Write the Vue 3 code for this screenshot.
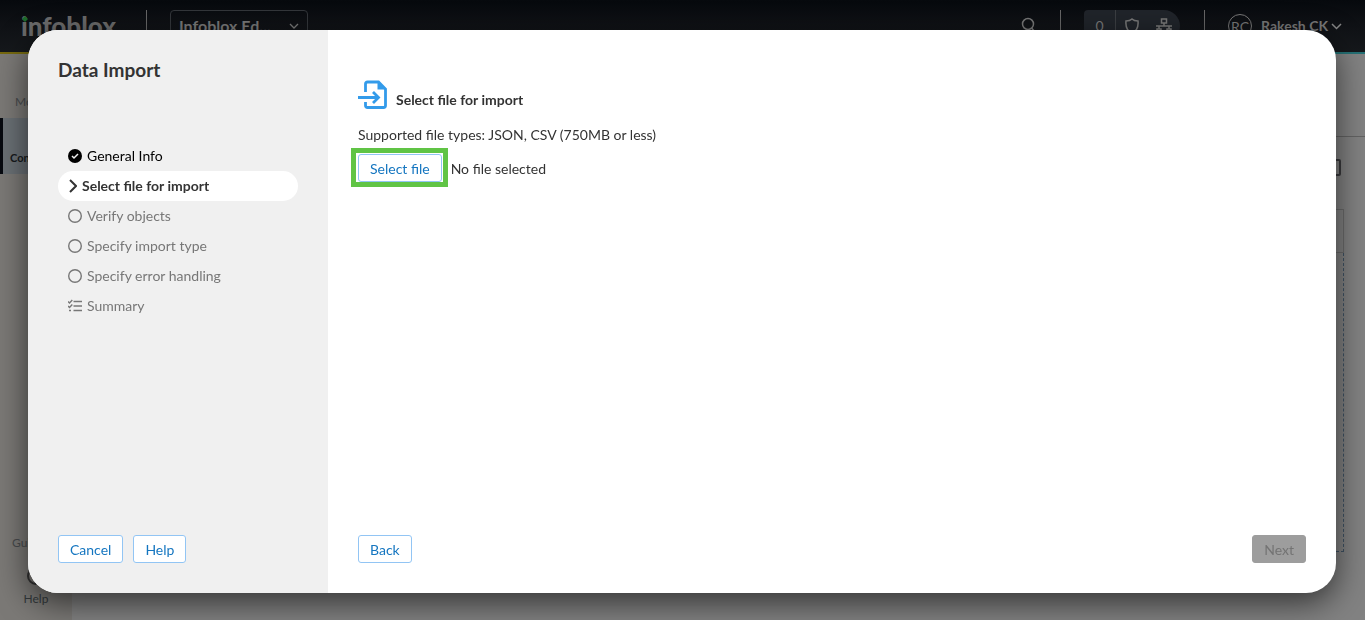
<script setup>
import { ref } from 'vue'

const steps = [
  { label: 'General Info', state: 'done' },
  { label: 'Select file for import', state: 'active' },
  { label: 'Verify objects', state: 'todo' },
  { label: 'Specify import type', state: 'todo' },
  { label: 'Specify error handling', state: 'todo' },
  { label: 'Summary', state: 'summary' },
]

const fileInput = ref(null)
const fileName = ref('')

function onPick(event) {
  const file = event.target.files[0]
  fileName.value = file ? file.name : ''
}
</script>

<template>
  <div class="page">
    <header class="topbar">
      <a class="logo" href="#">infoblox
        <svg class="logo-dot" width="6" height="6" viewBox="0 0 6 6" aria-hidden="true">
          <path d="M3 0L6 3L3 6L0 3Z" fill="#1c6a2b" />
        </svg>
      </a>
      <span class="rule logo-rule"></span>
      <button class="account" type="button">
        <span>Infoblox Ed...</span>
        <svg width="10" height="6" viewBox="0 0 10 6" fill="none" stroke="#777" stroke-width="1.300"><path d="M1 1L5 5L9 1" /></svg>
      </button>
      <button class="icon-button search" type="button" aria-label="Search">
        <svg width="16" height="18" viewBox="0 0 16 18" fill="none" stroke="#777" stroke-width="1.500">
          <circle cx="7" cy="7" r="5.500" /><path d="M10.500 11L15 16" />
        </svg>
      </button>
      <span class="rule"></span>
      <div class="status">
        <button class="count" type="button">0</button>
        <button class="icon-button" type="button" aria-label="Security">
          <svg width="14" height="16" viewBox="0 0 14 16" fill="none" stroke="#777" stroke-width="1.500">
            <path d="M7 1C5.500 2.500 3.500 3 1 3C.5 8 2 13 7 15C12 13 13.500 8 13 3C10.500 3 8.500 2.500 7 1Z" />
          </svg>
        </button>
        <button class="icon-button" type="button" aria-label="Network">
          <svg width="18" height="16" viewBox="0 0 18 16" fill="none" stroke="#777" stroke-width="1.500">
            <path d="M6.500 1H11.500V5H6.500ZM9 5V8M1 8H17M4 8V11M14 8V11M2 11H6V15H2ZM12 11H16V15H12Z" />
          </svg>
        </button>
      </div>
      <span class="rule user-rule"></span>
      <button class="user" type="button">
        <span class="avatar">RC</span>
        <span>Rakesh CK</span>
        <svg width="11" height="7" viewBox="0 0 11 7" fill="none" stroke="#858585" stroke-width="1.500"><path d="M1 1L5.500 5.500L10 1" /></svg>
      </button>
    </header>

    <div class="body">
      <nav class="rail">
        <a class="rail-link" href="#">Monitor</a>
        <a class="rail-link current" href="#">Configure</a>
        <span class="rail-space"></span>
        <a class="rail-link guide" href="#">Guides</a>
        <a class="rail-link help" href="#">
          <svg width="18" height="18" viewBox="0 0 18 18" fill="none" stroke="#333" stroke-width="2"><circle cx="9" cy="9" r="8" /></svg>
          Help
        </a>
      </nav>
      <main class="workspace">
        <div class="heading"></div>
        <div class="tools"><button class="square" type="button" aria-label="Options"></button></div>
        <div class="grid-head"></div>
        <div class="grid-body"></div>
      </main>
    </div>

    <section class="dialog" role="dialog" aria-labelledby="dialog-title">
      <aside class="wizard">
        <h1 id="dialog-title">Data Import</h1>
        <ol class="steps">
          <li v-for="step in steps" :key="step.label" :class="['step', step.state]">
            <svg v-if="step.state === 'done'" width="14" height="14" viewBox="0 0 14 14">
              <circle cx="7" cy="7" r="7" fill="#000" /><path d="M4 7L6 9L10 5" fill="none" stroke="#f0f0f0" stroke-width="1.500" />
            </svg>
            <svg v-else-if="step.state === 'active'" width="9" height="14" viewBox="0 0 9 14">
              <path d="M2 1L8 7L2 13" fill="none" stroke="#333" stroke-width="2" />
            </svg>
            <svg v-else-if="step.state === 'todo'" width="14" height="14" viewBox="0 0 14 14">
              <circle cx="7" cy="7" r="6.300" fill="none" stroke="#777" stroke-width="1.400" />
            </svg>
            <svg v-else width="14" height="14" viewBox="0 0 14 14" fill="none" stroke="#777" stroke-width="1.400">
              <path d="M5.500 2.500H14M5.500 7H14M5.500 11.500H14M0 2.500L1.500 4L4.300 1M0 7L1.500 8.500L4.300 5.500M1 11.500H3" />
            </svg>
            <span>{{ step.label }}</span>
          </li>
        </ol>
        <footer class="actions">
          <button class="btn" type="button">Cancel</button>
          <button class="btn" type="button">Help</button>
        </footer>
      </aside>

      <div class="content">
        <h2>
          <svg width="30" height="30" viewBox="0 0 30 30" fill="none" stroke="#339bea" stroke-width="2.800">
            <path d="M7.500 12V4Q7.500 2 9.500 2H20.500L27.500 9V25.500Q27.500 27.500 25.500 27.500H9.500Q7.500 27.500 7.500 25.500V22" />
            <path d="M19.500 1.500V9.500H28Z" fill="#339bea" stroke="none" />
            <path d="M0 17.500H20M15 12L20.500 17.500L15 23" />
          </svg>
          <span>Select file for import</span>
        </h2>
        <p class="types">Supported file types: JSON, CSV (750MB or less)</p>
        <div class="picker">
          <button class="btn marked" type="button" @click="fileInput.click()">Select file</button>
          <input ref="fileInput" type="file" accept=".json,.csv" aria-label="File for import" hidden @change="onPick">
          <span class="file-name">{{ fileName || 'No file selected' }}</span>
        </div>
        <footer class="actions spread">
          <button class="btn" type="button">Back</button>
          <button class="btn" type="button" disabled>Next</button>
        </footer>
      </div>
    </section>
  </div>
</template>

<style>
body {
  margin: 0;
  background: #828282;
}
</style>

<style scoped>
* {
  box-sizing: border-box;
}
.page {
  display: flex;
  flex-direction: column;
  height: 100vh;
  overflow: hidden;
  font: 14px/20px Lato, "Liberation Sans", sans-serif;
  color: #333;
}
button {
  font: inherit;
  color: inherit;
  background: none;
  border: 0;
  padding: 0;
  margin: 0;
}
a {
  color: inherit;
  text-decoration: none;
}
svg {
  flex: none;
  display: block;
}
.topbar {
  display: flex;
  align-items: center;
  height: 54px;
  flex: none;
  padding: 0 23px 2px 21px;
  color: #777;
  background: linear-gradient(90deg, #77690f, #2b6b45 50%, #257075) bottom / 100% 2px no-repeat,
    linear-gradient(#06090d, #101216 50%, #16191c);
}
.logo {
  position: relative;
  width: 96px;
  font-size: 26px;
  line-height: 32px;
  font-weight: 900;
  color: #6a6a6a;
}
.logo-dot {
  position: absolute;
  left: 1px;
  top: 6px;
}
.rule {
  width: 1px;
  height: 32px;
  background: #666;
}
.logo-rule {
  margin: 0 23px 0 29px;
}
.account {
  display: flex;
  align-items: center;
  justify-content: space-between;
  width: 138px;
  height: 32px;
  padding: 0 8px;
  border: 1px solid #33363a;
  border-radius: 4px;
  font-size: 16px;
  font-weight: 700;
}
.icon-button {
  display: flex;
  align-items: center;
  justify-content: center;
}
.search {
  margin: 0 23px 0 auto;
}
.status {
  display: flex;
  align-items: stretch;
  width: 96px;
  height: 32px;
  margin: 0 24px 0 23px;
  background: #20242a;
  border-radius: 4px 16px 16px 4px;
}
.status .icon-button {
  width: 32px;
}
.count {
  width: 32px;
  border-right: 1px solid #3b3e42;
}
.user-rule {
  margin-right: 23px;
}
.user {
  display: flex;
  align-items: center;
  font-weight: 700;
}
.avatar {
  width: 24px;
  height: 24px;
  margin-right: 9px;
  border: 1px solid #777;
  border-radius: 50%;
  line-height: 24px;
  font-weight: 400;
}
.user svg {
  margin-left: 3px;
}
.body {
  display: flex;
  flex: 1;
  min-height: 0;
}
.rail {
  display: flex;
  flex-direction: column;
  width: 72px;
  padding-top: 38px;
  background: #7b7976;
  font-size: 12px;
  line-height: 20px;
  color: #484b4d;
}
.rail-link {
  display: block;
  padding-left: 15px;
}
.current {
  height: 56px;
  margin-top: 6px;
  padding: 30px 0 0 7px;
  border-left: 3px solid #070a10;
  background: #6a7075;
  color: #16191c;
  font-size: 11px;
  font-weight: 700;
}
.rail-space {
  flex: 1;
}
.guide {
  padding-left: 12px;
}
.help {
  display: flex;
  flex-direction: column;
  align-items: center;
  padding: 14px 0 11px;
  gap: 4px;
  color: #33393c;
}
.workspace {
  display: flex;
  flex-direction: column;
  flex: 1;
  padding-right: 21px;
}
.heading {
  height: 83px;
  margin-right: -21px;
  border-bottom: 1px solid #636363;
}
.tools {
  display: flex;
  justify-content: flex-end;
  height: 72px;
  padding: 22px 3px 0 0;
}
.square {
  width: 17px;
  height: 17px;
  border: 2px solid #3a3a3d;
  border-radius: 2px;
}
.grid-head {
  height: 44px;
  border: 1px solid #6b6b6b;
}
.grid-body {
  height: 299px;
  border: 1px dashed #3f5264;
  border-top: 0;
}
.dialog {
  position: fixed;
  inset: 30px 29px 27px 28px;
  display: flex;
  overflow: hidden;
  border-radius: 30px;
  background: #fff;
  box-shadow: 0 10px 32px rgba(0, 0, 0, 0.6);
}
.wizard {
  display: flex;
  flex-direction: column;
  width: 300px;
  padding: 30px;
  background: #f0f0f0;
}
h1 {
  margin: 0 0 61px;
  font-size: 19px;
  line-height: 20px;
  font-weight: 700;
}
.steps {
  margin: 0;
  padding: 0;
  list-style: none;
}
.step {
  display: flex;
  align-items: center;
  gap: 5px;
  height: 30px;
  padding-left: 10px;
  color: #777;
}
.step.done {
  color: #000;
}
.step.active {
  border-radius: 15px;
  background: #fff;
  color: #333;
  font-weight: 700;
}
.actions {
  display: flex;
  gap: 10px;
  margin-top: auto;
}
.spread {
  justify-content: space-between;
}
.btn {
  height: 28px;
  padding: 2px 11px 0;
  border: 1px solid #92c5f4;
  border-radius: 3px;
  background: #fff;
  color: #1576c0;
}
.btn:disabled {
  border-color: #9d9d9d;
  background: #9d9d9d;
  color: #737373;
}
.content {
  display: flex;
  flex-direction: column;
  flex: 1;
  padding: 50px 30px 30px;
}
h2 {
  display: flex;
  align-items: flex-end;
  gap: 8px;
  margin: 0;
  font-size: 14px;
  line-height: 20px;
  font-weight: 700;
}
.types {
  margin: 15px 0 9px;
}
.picker {
  display: flex;
  align-items: center;
  gap: 9px;
}
.file-name {
  padding-top: 2px;
}
.marked {
  position: relative;
}
.marked::after {
  content: "";
  position: absolute;
  inset: -7px -7px -6px -8px;
  border: 5px solid #60c445;
}
</style>
